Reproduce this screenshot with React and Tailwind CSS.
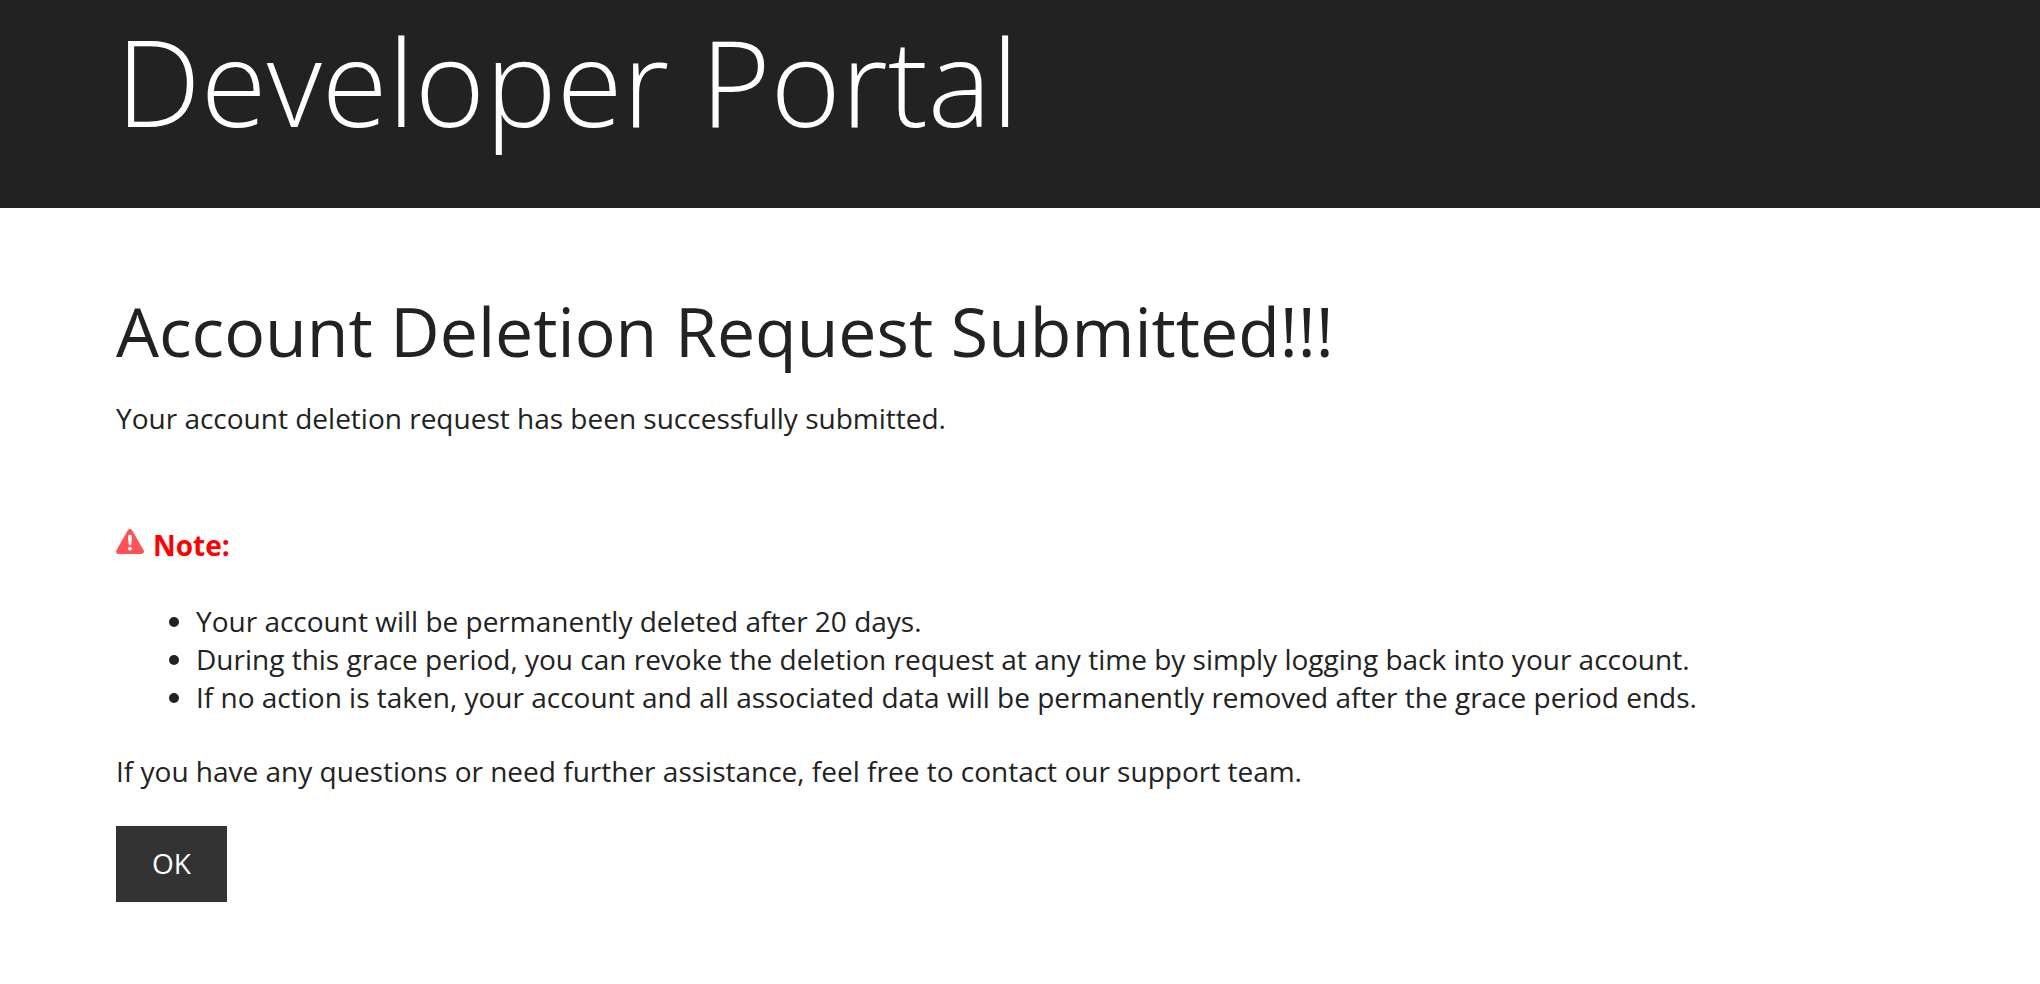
export default function App() {
  return (
    <div className="min-h-screen bg-white font-['Open_Sans',sans-serif] text-[#222222]">
      <header className="bg-[#222222] px-[116px] pb-[46px]">
        <p className="text-[120px] leading-[162px] font-light text-white">Developer Portal</p>
      </header>
      <main className="px-[116px] pt-[75px] text-[28px] leading-[38px]">
        <h1 className="text-[68px] leading-[96px]">Account Deletion Request Submitted!!!</h1>
        <p className="mt-5">Your account deletion request has been successfully submitted.</p>
        <p className="mt-[89px] flex items-center gap-[9px] font-bold text-[#ff0000]">
          <svg className="mb-2 h-7 w-7" viewBox="0 0 28 28" aria-hidden="true">
            <path d="M14 4.6 25.4 24.4H2.6Z" fill="#ff5252" stroke="#ff5252" strokeWidth="5" strokeLinejoin="round" />
            <path d="M12 9.8a2 2 0 0 1 4 0L15.3 17a1.3 1.3 0 0 1-2.6 0Z" fill="white" />
            <circle cx="14" cy="21.6" r="1.9" fill="white" />
          </svg>
          Note:
        </p>
        <ul className="mt-[38px] list-disc pl-20">
          <li>Your account will be permanently deleted after 20 days.</li>
          <li>During this grace period, you can revoke the deletion request at any time by simply logging back into your account.</li>
          <li>If no action is taken, your account and all associated data will be permanently removed after the grace period ends.</li>
        </ul>
        <p className="mt-9">If you have any questions or need further assistance, feel free to contact our support team.</p>
        <button type="button" className="mt-9 bg-[#333333] px-9 pt-[18px] pb-5 text-white">OK</button>
      </main>
    </div>
  );
}
